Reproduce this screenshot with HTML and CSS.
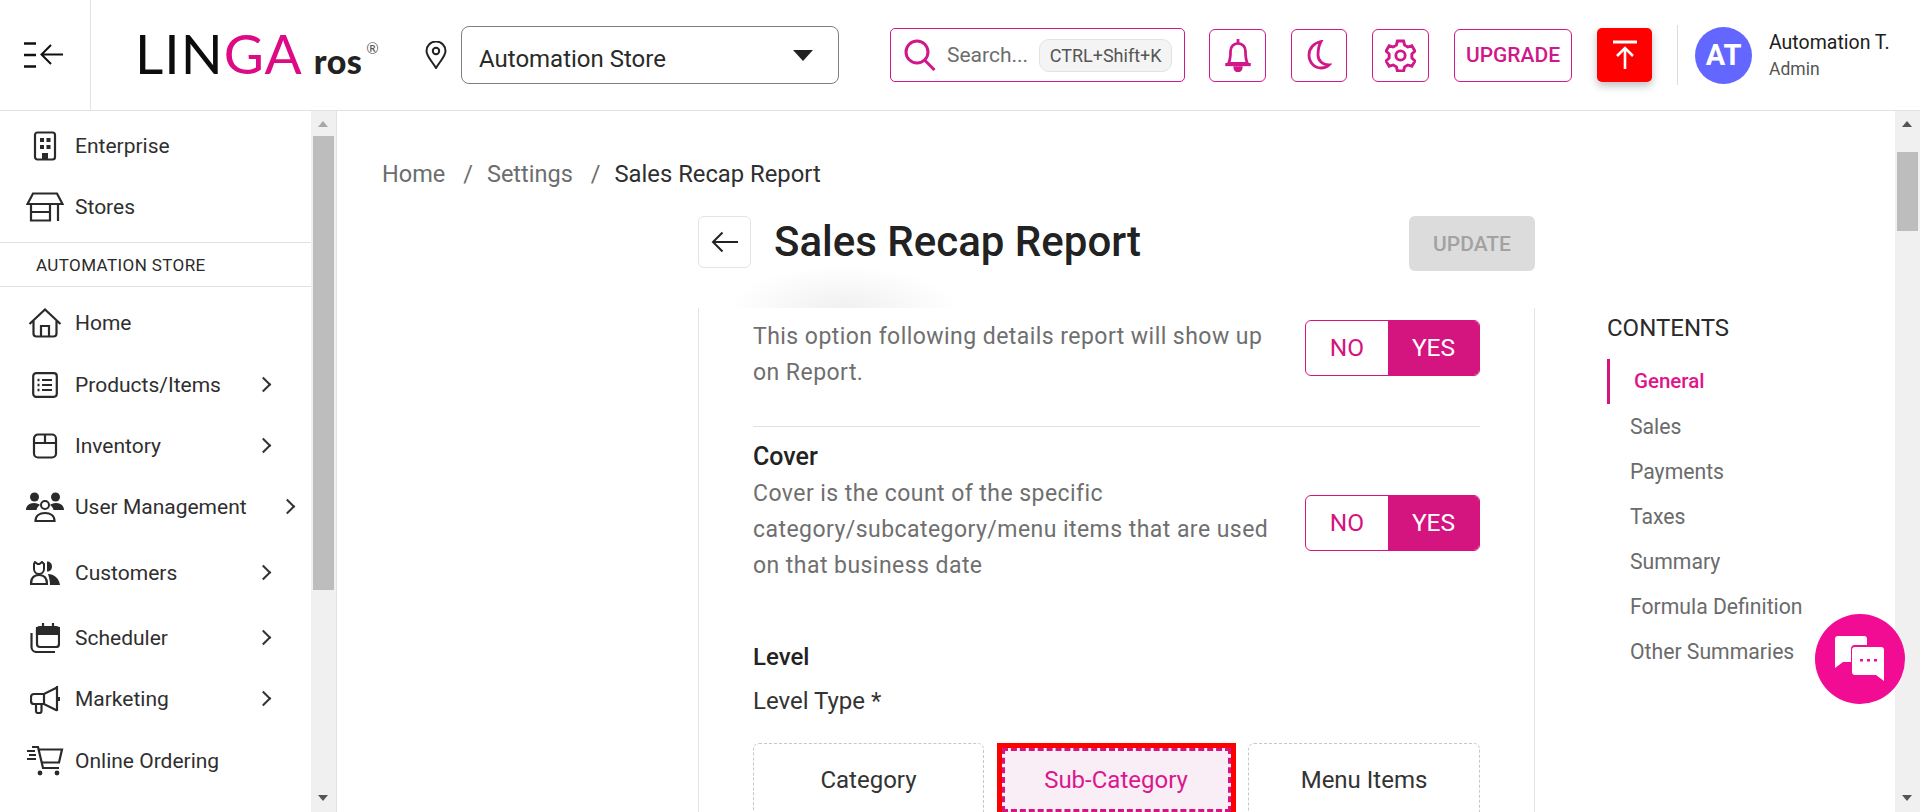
FILE: index.html
```html
<!DOCTYPE html>
<html>
    <head>
        <meta name="viewport" content="width=device-width"/>
        <title>Sales Recap Report</title>
        <link rel="stylesheet" href="styles.css">
    </head>
    <body>
        <header class="topbar">
            <div class="menu-cell">
                <svg width="40" height="28" viewBox="0 0 40 28" fill="none" stroke="#111" stroke-width="2.4">
                    <path d="M0 2.5h12M0 14h12M0 25.5h12"/>
                    <path d="M39 13.5H18M27 4l-9.5 9.5L27 23" stroke-width="2"/>
                </svg>
            </div>
            <div class="logo"><span>LIN</span><span class="logo-pink">GA</span><span class="logo-ros">ros</span><span class="logo-reg">®</span></div>
            <svg class="pin" width="22" height="28" viewBox="0 0 22 28" fill="none" stroke="#222" stroke-width="2">
                <path d="M11 27C6 19 1.500 15 1.500 10a9.500 9.500 0 0 1 19 0c0 5-4.500 9-9.500 17z"/>
                <circle cx="11" cy="10" r="3.200"/>
            </svg>
            <div class="store-select">
                <span>Automation Store</span>
                <i class="caret"></i>
            </div>
            <div class="search">
                <svg width="34" height="32" viewBox="0 0 34 32" fill="none" stroke="#d0188a" stroke-width="3">
                    <circle cx="13" cy="13" r="11"/>
                    <path d="M20.500 21l10 10"/>
                </svg>
                <span class="search-text">Search...</span>
                <span class="kbd">CTRL+Shift+K</span>
            </div>
            <div class="actions">
                <button class="act-btn">
                    <svg width="32" height="34" viewBox="0 0 28 32" fill="none" stroke="#d0188a" stroke-width="2.600">
                        <path d="M14 1v3M5 24c2-4 2-7 2-12a7 7 0 0 1 14 0c0 5 0 8 2 12z"/>
                        <path d="M2 25h24" stroke-width="3"/>
                        <path d="M11 28a3 3 0 0 0 6 0z" fill="#d0188a"/>
                    </svg>
                </button>
                <button class="act-btn act-moon">
                    <svg width="26" height="30" viewBox="0 0 26 30" fill="none" stroke="#d0188a" stroke-width="2.800">
                        <path d="M15 1.500C8 3 3 8 3 15c0 7 5 13 12 13 3.500 0 6-1 8-3-6 0-11-4-11-10 0-6 1-10 3-13.500z"/>
                    </svg>
                </button>
                <button class="act-btn">
                    <svg width="31" height="33" viewBox="0 0 30 32" fill="none" stroke="#d0188a" stroke-width="2.800">
                        <path d="M12 2h6l1 4 3 1.800 4-1.200 3 5-3 3v3.800l3 3-3 5-4-1.200-3 1.800-1 4h-6l-1-4-3-1.800-4 1.200-3-5 3-3v-3.800l-3-3 3-5 4 1.200 3-1.800z"/>
                        <circle cx="15" cy="16" r="4.500"/>
                    </svg>
                </button>
                <button class="act-btn act-upgrade">UPGRADE</button>
                <button class="act-red">
                    <svg width="26" height="30" viewBox="0 0 26 30" fill="none" stroke="#fff" stroke-width="2.600">
                        <path d="M1 2h24" stroke-width="3"/>
                        <path d="M13 29V9M5 16l8-8 8 8"/>
                    </svg>
                </button>
            </div>
            <div class="user">
                <div class="avatar">AT</div>
                <div class="user-info">
                    <div class="user-name">Automation T.</div>
                    <div class="user-role">Admin</div>
                </div>
            </div>
        </header>

        <div class="layout">
            <aside class="sidebar">
                <nav class="side-nav">
                    <a class="nav-item">
                        <svg width="24" height="30" viewBox="0 0 24 30" fill="none" stroke="#2a2a2a" stroke-width="2.200">
                            <rect x="2" y="1.500" width="20" height="27" rx="2.500"/>
                            <path d="M7 7h4v4H7zM13.500 7h4v4h-4zM7 14h4v4H7zM13.500 14h4v4h-4z" fill="#2a2a2a" stroke="none"/>
                            <path d="M9 28v-6h6v6z" fill="#2a2a2a" stroke="none"/>
                        </svg>
                        <span>Enterprise</span>
                    </a>
                    <a class="nav-item">
                        <svg width="38" height="30" viewBox="0 0 38 30" fill="none" stroke="#2a2a2a" stroke-width="2.200">
                            <path d="M7 1.500h24l5.500 10.500H1.500zM5 12v16.500h19V12M5 20h19M32 12v17"/>
                        </svg>
                        <span>Stores</span>
                    </a>
                </nav>
                <div class="store-label">AUTOMATION STORE</div>
                <nav class="side-nav side-nav-store">
                    <a class="nav-item">
                        <svg width="34" height="30" viewBox="0 0 34 30" fill="none" stroke="#2a2a2a" stroke-width="2.200">
                            <path d="M1.500 16L17 1.500 32.500 16M5.500 13v12.500a3 3 0 0 0 3 3h17a3 3 0 0 0 3-3V13M13 28.500V18h8v10.500"/>
                        </svg>
                        <span>Home</span>
                    </a>
                    <a class="nav-item nav-gap-1">
                        <svg width="26" height="26" viewBox="0 0 26 26" fill="none" stroke="#2a2a2a" stroke-width="2.200">
                            <rect x="1.200" y="1.200" width="23.600" height="23.600" rx="3"/>
                            <path d="M10 8h10M10 13h10M10 18h10"/>
                            <path d="M5.500 8h2M5.500 13h2M5.500 18h2" stroke-width="2.600"/>
                        </svg>
                        <span>Products/Items</span>
                        <i class="chev"></i>
                    </a>
                    <a class="nav-item">
                        <svg width="26" height="26" viewBox="0 0 26 26" fill="none" stroke="#2a2a2a" stroke-width="2.200">
                            <path d="M6 1.500h14a4 4 0 0 1 4 4v15a4 4 0 0 1-4 4H6a4 4 0 0 1-4-4v-15a4 4 0 0 1 4-4zM2 10h22M13 1.500V10"/>
                        </svg>
                        <span>Inventory</span>
                        <i class="chev"></i>
                    </a>
                    <a class="nav-item">
                        <svg width="38" height="30" viewBox="0 0 38 30" fill="#2a2a2a">
                            <circle cx="8.500" cy="5" r="4.500"/>
                            <circle cx="29.500" cy="5" r="4.500"/>
                            <path d="M0 18c0-4 3-7 8-7 3 0 5 1 6 2-2 1-3 3-3.500 5zM38 18c0-4-3-7-8-7-3 0-5 1-6 2 2 1 3 3 3.500 5z"/>
                            <circle cx="19" cy="13" r="4" fill="none" stroke="#2a2a2a" stroke-width="2"/>
                            <path d="M9.500 29c0-5 4-8 9.500-8s9.500 3 9.500 8z" fill="none" stroke="#2a2a2a" stroke-width="2.200"/>
                        </svg>
                        <span>User Management</span>
                        <i class="chev chev-far"></i>
                    </a>
                    <a class="nav-item nav-gap-5">
                        <svg width="30" height="24" viewBox="0 0 30 24" fill="#2a2a2a">
                            <path d="M5 1l2.500 2h2L12 1l2 2v5a5 5 0 0 1-10 0V3z" fill="none" stroke="#2a2a2a" stroke-width="2"/>
                            <path d="M17 .5c3 0 5 2 5 5s-2 5-5 5z"/>
                            <path d="M1 23c0-6 3-9 8-9s8 3 8 9z" fill="none" stroke="#2a2a2a" stroke-width="2.200"/>
                            <path d="M18 13c6 0 11 4 12 11H20c0-4-1-8-2-11z"/>
                        </svg>
                        <span>Customers</span>
                        <i class="chev"></i>
                    </a>
                    <a class="nav-item nav-gap-4">
                        <svg width="30" height="30" viewBox="0 0 30 30" fill="none" stroke="#2a2a2a" stroke-width="2.200">
                            <rect x="7" y="4" width="22" height="20" rx="3"/>
                            <path d="M7 5h22v6H7z" fill="#2a2a2a"/>
                            <path d="M13 0v4M23 0v4"/>
                            <path d="M1.500 10v14a5 5 0 0 0 5 5H25"/>
                        </svg>
                        <span>Scheduler</span>
                        <i class="chev"></i>
                    </a>
                    <a class="nav-item">
                        <svg width="30" height="30" viewBox="0 0 30 30" fill="none" stroke="#2a2a2a" stroke-width="2.200">
                            <path d="M27 2v25M27 3.500L14 10H4a3 3 0 0 0-3 3v4a3 3 0 0 0 3 3h10l13 6.500M14 10v10"/>
                            <path d="M6 20v7a2 2 0 0 0 2 2h1.500a2 2 0 0 0 2-2v-7"/>
                            <path d="M29 13v4" stroke-width="3"/>
                        </svg>
                        <span>Marketing</span>
                        <i class="chev"></i>
                    </a>
                    <a class="nav-item nav-gap-1">
                        <svg width="38" height="30" viewBox="0 0 38 30" fill="none" stroke="#2a2a2a" stroke-width="2.200">
                            <path d="M6 1h6l5 21h16M12.500 3.500H36l-3 13H15.500"/>
                            <path d="M1 5h8M3 9h7M1 13h9" stroke-width="2"/>
                            <circle cx="14" cy="27" r="2.400" fill="#2a2a2a" stroke="none"/>
                            <circle cx="31" cy="27" r="2.400" fill="#2a2a2a" stroke="none"/>
                        </svg>
                        <span>Online Ordering</span>
                    </a>
                    <a class="nav-item nav-gap-1">
                        <svg width="30" height="30" viewBox="0 0 30 30" fill="none" stroke="#2a2a2a" stroke-width="2.200">
                            <path d="M15 12a4 4 0 1 1 6 3l-3 3-8 9"/>
                        </svg>
                    </a>
                </nav>
                <div class="scrollbar scrollbar-side">
                    <i class="arrow-up"></i>
                    <div class="thumb thumb-side"></div>
                    <i class="arrow-down"></i>
                </div>
            </aside>

            <main class="main">
                <div class="crumbs">
                    <span>Home</span><em>/</em><span>Settings</span><em>/</em><span class="crumb-now">Sales Recap Report</span>
                </div>
                <div class="page-head">
                    <button class="back-btn">
                        <svg width="28" height="22" viewBox="0 0 28 22" fill="none" stroke="#222" stroke-width="2">
                            <path d="M27 11H2M11.500 1.500L2 11l9.500 9.500"/>
                        </svg>
                    </button>
                    <h1>Sales Recap Report</h1>
                    <button class="update-btn">UPDATE</button>
                    <div class="head-shadow"></div>
                </div>
                <div class="page-body">
                    <section class="card">
                        <div class="opt-row opt-row-first">
                            <p class="opt-desc">This option following details report will show up on Report.</p>
                            <div class="toggle"><span class="tg-no">NO</span><span class="tg-yes">YES</span></div>
                        </div>
                        <div class="opt-line"></div>
                        <h3 class="opt-title">Cover</h3>
                        <div class="opt-row opt-row-cover">
                            <p class="opt-desc">Cover is the count of the specific category/subcategory/menu items that are used on that business date</p>
                            <div class="toggle toggle-low"><span class="tg-no">NO</span><span class="tg-yes">YES</span></div>
                        </div>
                        <h3 class="opt-title level-title">Level</h3>
                        <div class="level-type">Level Type *</div>
                        <div class="tiles">
                            <div class="tile">Category</div>
                            <div class="tile tile-on"><span>Sub-Category</span></div>
                            <div class="tile">Menu Items</div>
                        </div>
                    </section>
                    <aside class="toc">
                        <div class="toc-title">CONTENTS</div>
                        <a class="toc-item toc-active">General</a>
                        <a class="toc-item">Sales</a>
                        <a class="toc-item">Payments</a>
                        <a class="toc-item">Taxes</a>
                        <a class="toc-item">Summary</a>
                        <a class="toc-item">Formula Definition</a>
                        <a class="toc-item">Other Summaries</a>
                    </aside>
                </div>
            </main>

            <div class="scrollbar scrollbar-main">
                <i class="arrow-up"></i>
                <div class="thumb thumb-main"></div>
                <i class="arrow-down"></i>
            </div>

            <button class="chat">
                <svg width="50" height="48" viewBox="0 0 50 48" fill="#fff">
                    <path d="M3 1h26a3 3 0 0 1 3 3v6H20a4 4 0 0 0-4 4v13H8l-8 6V4a3 3 0 0 1 3-3z"/>
                    <path d="M20 12h26a3 3 0 0 1 3 3v31l-8-6H20a3 3 0 0 1-3-3V15a3 3 0 0 1 3-3z"/>
                    <path d="M25 24h3v2.500h-3zM32 24h3v2.500h-3zM39 24h3v2.500h-3z" fill="#f20b93"/>
                </svg>
            </button>
        </div>
    </body>
</html>
```

FILE: styles.css
```css
* {
    box-sizing: border-box;
}
html, body {
    height: 100%;
}
body {
    margin: 0;
    overflow: hidden;
    background: #fff;
    color: #2a2a2a;
    font-family: Roboto, "Liberation Sans", sans-serif;
    display: flex;
    flex-direction: column;
}
button {
    font-family: inherit;
    padding: 0;
    background: #fff;
    cursor: pointer;
}

/* header */
.topbar {
    height: 111px;
    flex: none;
    display: flex;
    align-items: center;
    border-bottom: 1px solid #e2e2e2;
}
.menu-cell {
    width: 91px;
    height: 110px;
    flex: none;
    display: flex;
    align-items: center;
    padding-left: 24px;
    border-right: 1px solid #e2e2e2;
}
.logo {
    width: 334px;
    flex: none;
    padding: 4px 0 0 44px;
    display: flex;
    align-items: baseline;
    font-family: Lato, sans-serif;
    font-size: 55px;
    letter-spacing: 1px;
    color: #0c0c0c;
    line-height: 60px;
}
.logo-pink {
    color: #dc0a84;
}
.logo-ros {
    margin-left: 11px;
    font-size: 34px;
    font-weight: 900;
    letter-spacing: .5px;
    color: #222;
}
.logo-reg {
    margin: 0 0 0 4px;
    font-size: 15px;
    letter-spacing: 0;
    color: #555;
    align-self: flex-start;
    line-height: 50px;
}
.pin {
    flex: none;
    margin-top: -1px;
    margin-right: 14px;
}
.store-select {
    width: 378px;
    height: 58px;
    flex: none;
    display: flex;
    align-items: center;
    justify-content: space-between;
    padding: 8px 25px 0 17px;
    border: 1px solid #7d7f88;
    border-radius: 8px;
    font-size: 24px;
}
.caret {
    width: 0;
    height: 0;
    margin-top: -8px;
    border-left: 10px solid transparent;
    border-right: 10px solid transparent;
    border-top: 11px solid #222;
}
.search {
    width: 295px;
    height: 54px;
    flex: none;
    margin-left: 51px;
    display: flex;
    align-items: center;
    padding-left: 13px;
    border: 1px solid #d0188a;
    border-radius: 5px;
}
.search-text {
    margin-left: 9px;
    font-size: 21px;
    color: #6d6d6d;
}
.kbd {
    margin-left: 11px;
    width: 133px;
    height: 33px;
    line-height: 32px;
    text-align: center;
    font-size: 18px;
    color: #555;
    background: #f4f4f4;
    border: 1px solid #e2e2e2;
    border-radius: 10px;
}
.actions {
    margin-left: 24px;
    display: flex;
    align-items: center;
    gap: 25px;
}
.act-btn {
    width: 57px;
    height: 53px;
    display: flex;
    align-items: center;
    justify-content: center;
    border: 1px solid #d0188a;
    border-radius: 6px;
}
.act-moon {
    width: 56px;
}
.act-upgrade {
    width: 118px;
    font-size: 21px;
    font-weight: 500;
    color: #d0188a;
}
.act-red {
    width: 55px;
    height: 54px;
    display: flex;
    align-items: center;
    justify-content: center;
    background: #f00;
    border: 0;
    border-radius: 5px;
    box-shadow: 0 4px 8px rgba(0, 0, 0, .25);
}
.user {
    margin-left: 25px;
    height: 60px;
    padding-left: 17px;
    display: flex;
    align-items: center;
    border-left: 1px solid #dcdcdc;
}
.avatar {
    width: 57px;
    height: 57px;
    border-radius: 50%;
    background: #6467ff;
    color: #fff;
    text-align: center;
    line-height: 57px;
    font-size: 29px;
    font-weight: 700;
}
.user-info {
    margin-left: 17px;
    white-space: nowrap;
}
.user-name {
    font-size: 19.500px;
    line-height: 24px;
    color: #1d1d1d;
}
.user-role {
    margin-top: 4px;
    font-size: 17.500px;
    line-height: 20px;
    color: #555;
}

/* sidebar */
.layout {
    flex: 1;
    min-height: 0;
    display: flex;
    position: relative;
}
.sidebar {
    width: 337px;
    flex: none;
    position: relative;
    overflow: hidden;
    padding-right: 25px;
    border-right: 1px solid #e2e2e2;
}
.side-nav {
    padding-top: 4px;
}
.side-nav-store {
    padding-top: 5px;
}
.nav-item {
    height: 61px;
    display: flex;
    align-items: center;
    position: relative;
    font-size: 21px;
    color: #2f2f2f;
}
.nav-item svg {
    position: absolute;
    left: 45px;
    transform: translateX(-50%);
}
.nav-item span {
    margin-left: 75px;
}
.nav-gap-1 {
    margin-top: 1px;
}
.nav-gap-4 {
    margin-top: 4px;
}
.nav-gap-5 {
    margin-top: 5px;
}
.chev {
    position: absolute;
    left: 258px;
    width: 11px;
    height: 11px;
    border-top: 2px solid #333;
    border-right: 2px solid #333;
    transform: rotate(45deg);
}
.chev-far {
    left: 282px;
}
.store-label {
    margin-top: 5px;
    height: 45px;
    padding-left: 36px;
    line-height: 44px;
    font-size: 17px;
    letter-spacing: .4px;
    color: #2a2a2a;
    border-top: 1px solid #e2e2e2;
    border-bottom: 1px solid #e2e2e2;
}

/* drawn scrollbars */
.scrollbar {
    width: 25px;
    background: #f0f0f0;
    position: relative;
}
.scrollbar-side {
    position: absolute;
    right: 0;
    top: 0;
    bottom: 0;
}
.scrollbar-main {
    flex: none;
}
.thumb {
    position: absolute;
    left: 2px;
    width: 21px;
    background: #bdbdbd;
}
.thumb-side {
    top: 25px;
    height: 454px;
}
.thumb-main {
    top: 41px;
    height: 79px;
}
.arrow-up, .arrow-down {
    position: absolute;
    left: 7px;
    width: 0;
    height: 0;
    border-left: 5.500px solid transparent;
    border-right: 5.500px solid transparent;
}
.arrow-up {
    top: 10px;
    border-bottom: 6px solid #555;
}
.arrow-down {
    bottom: 11px;
    border-top: 6px solid #555;
}
.scrollbar-side .arrow-up {
    border-bottom-color: #a8a8a8;
}

/* main area */
.main {
    flex: 1;
    min-width: 0;
    overflow: hidden;
    padding-top: 48px;
}
.crumbs {
    padding-left: 45px;
    display: flex;
    font-size: 23.500px;
    line-height: 30px;
    color: #6d6d6d;
    white-space: nowrap;
}
.crumbs em {
    font-style: normal;
    margin: 0 14px 0 18px;
}
.crumb-now {
    font-size: 23.800px;
    color: #2f2f2f;
}
.page-head {
    width: 837px;
    height: 55px;
    margin: 27px 0 0 361px;
    display: flex;
    align-items: flex-start;
    position: relative;
}
.back-btn {
    width: 53px;
    height: 52px;
    flex: none;
    display: flex;
    align-items: center;
    justify-content: center;
    border: 1px solid #e4e4e4;
    border-radius: 6px;
}
.page-head h1 {
    margin: 1px 0 0 23px;
    font-size: 42px;
    line-height: 50px;
    font-weight: 500;
    color: #222;
    position: relative;
    z-index: 1;
}
.update-btn {
    width: 126px;
    height: 55px;
    margin-left: auto;
    background: #dcdcdc;
    border: 0;
    border-radius: 6px;
    font-size: 21px;
    font-weight: 500;
    color: #a2a2a2;
}
.head-shadow {
    position: absolute;
    left: 30px;
    top: 32px;
    width: 230px;
    height: 60px;
    background: radial-gradient(ellipse 50% 70% at 50% 100%, rgba(0, 0, 0, .06), rgba(0, 0, 0, 0));
}
.page-body {
    display: flex;
    margin: 37px 0 0 361px;
}
.card {
    width: 837px;
    flex: none;
    height: 600px;
    padding: 0 54px;
    overflow: hidden;
    border-left: 1px solid #e4e4e4;
    border-right: 1px solid #e4e4e4;
}
.opt-title {
    margin: 0;
    font-size: 25px;
    line-height: 36px;
    font-weight: 500;
    color: #232323;
}
.opt-row {
    display: flex;
    justify-content: space-between;
    align-items: flex-start;
}
.opt-row-first {
    margin-top: 11px;
}
.opt-row-cover {
    margin-top: 1px;
}
.opt-desc {
    margin: 0;
    width: 525px;
    font-size: 23px;
    letter-spacing: .45px;
    line-height: 36px;
    color: #6f6f6f;
}
.toggle {
    width: 175px;
    height: 56px;
    margin-top: 1px;
    flex: none;
    display: flex;
    border: 1px solid #d4157f;
    border-radius: 6px;
    overflow: hidden;
    font-size: 24.500px;
    line-height: 54px;
    text-align: center;
}
.toggle-low {
    margin-top: 19px;
}
.tg-no {
    width: 82px;
    color: #d4157f;
    box-shadow: 2px 0 3px rgba(0, 0, 0, .08);
}
.tg-yes {
    flex: 1;
    background: #d4157f;
    color: #fff;
}
.opt-line {
    height: 1px;
    margin-top: 35px;
    margin-bottom: 12px;
    background: #dfdfe6;
}
.level-title {
    margin-top: 55px;
    font-size: 24px;
}
.level-type {
    margin-top: 8px;
    font-size: 24px;
    line-height: 36px;
    color: #333;
}
.tiles {
    margin-top: 24px;
    display: grid;
    grid-template-columns: 231px 231px 232px;
    column-gap: 16.500px;
}
.tile {
    height: 74px;
    display: flex;
    align-items: center;
    justify-content: center;
    font-size: 24px;
    color: #333;
    border: 1px dashed #c6c6d2;
    border-radius: 6px;
}
.tile-on {
    margin: 0 -4px;
    border: 5px solid #f00;
    border-radius: 0;
}
.tile-on span {
    width: 100%;
    height: 100%;
    display: flex;
    align-items: center;
    justify-content: center;
    color: #d9188f;
    background: #f9eef6;
    border: 3px dashed #d4157f;
}
.toc {
    margin-left: 72px;
    display: flex;
    flex-direction: column;
}
.toc-title {
    height: 51px;
    font-size: 24px;
    line-height: 40px;
    color: #2a2a2a;
}
.toc-item {
    height: 45px;
    padding-left: 23px;
    font-size: 21.200px;
    line-height: 45px;
    color: #6b6b6b;
    white-space: nowrap;
}
.toc-active {
    padding-left: 24px;
    border-left: 3px solid #d4157f;
    color: #e0148c;
    font-size: 20.500px;
    font-weight: 500;
}
.chat {
    position: absolute;
    left: 1815px;
    top: 503px;
    width: 90px;
    height: 90px;
    display: flex;
    align-items: center;
    justify-content: center;
    background: #f20b93;
    border: 0;
    border-radius: 50%;
}
```
